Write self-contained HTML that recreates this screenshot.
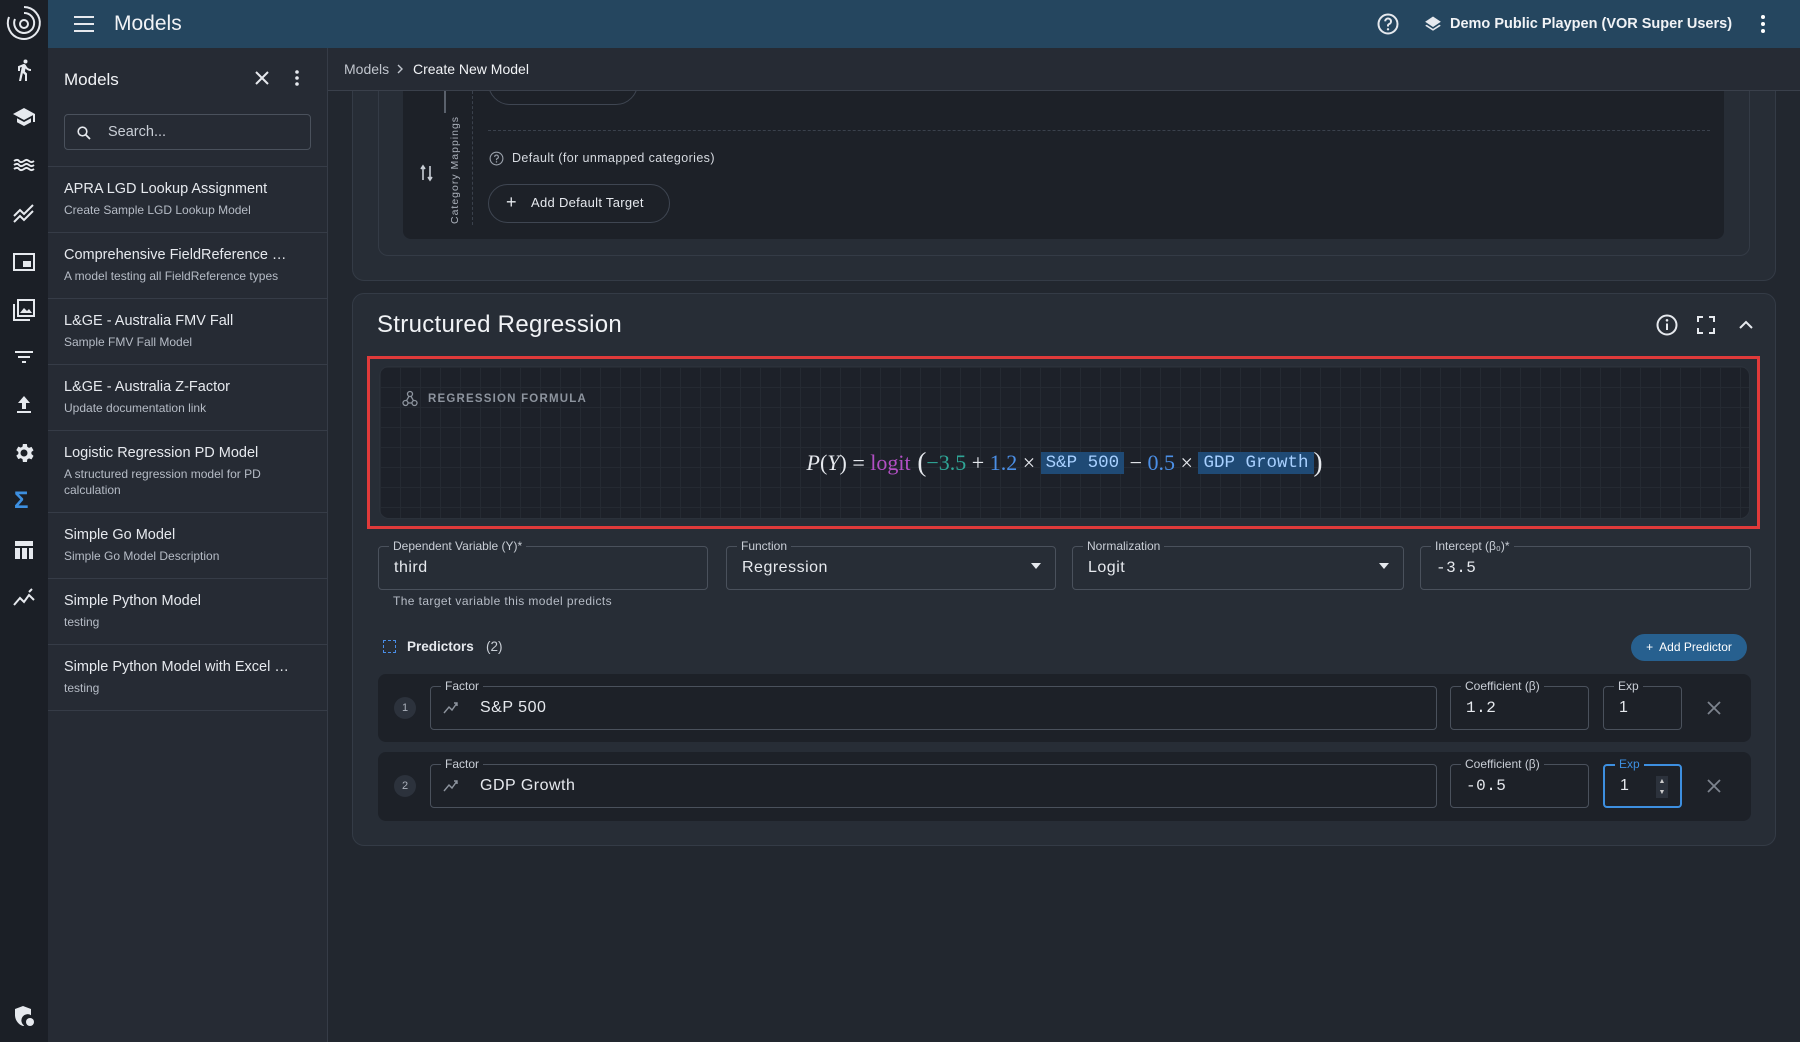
<!DOCTYPE html>
<html><head><meta charset="utf-8">
<style>
*{box-sizing:border-box;margin:0;padding:0}
body{width:1800px;height:1042px;overflow:hidden;background:#22272f;font-family:"Liberation Sans",sans-serif;color:#e6e9ee;position:relative}
.abs{position:absolute}
.rail{left:0;top:0;width:48px;height:1042px;background:#1b1f26}
.top{left:48px;top:0;width:1752px;height:48px;background:#25465f}
.side{left:48px;top:48px;width:280px;height:994px;background:#262b34;border-right:1px solid #363c47}
.item{position:absolute;left:0;width:279px;border-bottom:1px solid #363c47;padding-left:16px}
.item .t{font-size:14.5px;color:#e6e9ee;white-space:nowrap}
.item .s{font-size:12px;color:#b6bcc6;margin-top:5px;line-height:16px}
.crumb{left:328px;top:48px;width:1472px;height:43px;background:#262b34;border-bottom:1px solid #3a404b}
.card{background:#272d36;border:1px solid #343b46;border-radius:12px}
.fld{position:absolute;border:1px solid #4a515c;border-radius:4px;height:44px}
.fld .lb{position:absolute;top:-8px;left:10px;padding:0 4px;font-size:12px;color:#c9ced6;background:#272d36;line-height:14px}
.fld .v{position:absolute;left:15px;top:12px;font-size:16px;color:#e6e9ee;letter-spacing:.5px}
.row .fld .lb{background:#1d2128}
.mono{font-family:"Liberation Mono",monospace}
.ico{stroke:#e6e9ee;fill:none;stroke-width:2}
</style></head><body>

<!-- top card (partial) -->
<div class="abs card" style="left:352px;top:40px;width:1424px;height:241px"></div>
<div class="abs" style="left:378px;top:40px;width:1372px;height:216px;border:1px solid #343b46;border-radius:10px;background:#272d36"></div>
<div class="abs" style="left:403px;top:40px;width:1321px;height:199px;background:#1d2128;border-radius:8px"></div>
<div class="abs" style="left:488px;top:60px;width:150px;height:45px;border:1px solid #3f4652;border-radius:22px"></div>
<div class="abs" style="left:444px;top:91px;width:2px;height:22px;background:#5a616c"></div>
<div class="abs" style="left:472px;top:91px;height:134px;border-left:1px dashed #3a414c"></div>
<div class="abs" style="left:488px;top:130px;width:1222px;border-top:1px dashed #3a414c"></div>
<div class="abs" style="left:449px;top:224px;transform:rotate(-90deg);transform-origin:0 0;font-size:10.5px;letter-spacing:1px;color:#aab0ba;white-space:nowrap">Category Mappings</div>
<svg class="abs" style="left:419px;top:164px" width="16" height="18" viewBox="0 0 16 18"><path d="M4 16V3M2 5l2-3 2 3M11 2v13M9 13l2 3 2-3" fill="none" stroke="#c9ced6" stroke-width="1.6"/></svg>
<svg class="abs" style="left:489px;top:151px" width="15" height="15" viewBox="0 0 16 16"><circle cx="8" cy="8" r="6.8" fill="none" stroke="#9aa1ab" stroke-width="1.2"/><path d="M6 6.3a2 2 0 1 1 2.6 1.9c-.4.2-.6.5-.6 1v.6" fill="none" stroke="#9aa1ab" stroke-width="1.2"/><circle cx="8" cy="11.6" r=".8" fill="#9aa1ab"/></svg>
<div class="abs" style="left:512px;top:151px;font-size:12.5px;letter-spacing:.4px;color:#d6dae0">Default (for unmapped categories)</div>
<div class="abs" style="left:488px;top:184px;width:182px;height:39px;border:1px solid #3f4652;border-radius:20px"></div>
<div class="abs" style="left:506px;top:192px;font-size:18px;color:#e6e9ee">+</div>
<div class="abs" style="left:531px;top:195px;font-size:13px;color:#e6e9ee;letter-spacing:.3px">Add Default Target</div>

<div class="abs crumb"></div>
<div class="abs" style="left:344px;top:61px;font-size:14px;color:#c0c5cd">Models</div>
<svg class="abs" style="left:396px;top:64px" width="8" height="10" viewBox="0 0 8 10"><path d="M2 1l4 4-4 4" fill="none" stroke="#c0c5cd" stroke-width="1.4"/></svg>
<div class="abs" style="left:413px;top:61px;font-size:14px;color:#f1f3f6">Create New Model</div>

<div class="abs rail"></div>
<!-- rail icons -->
<svg class="abs" style="left:4px;top:3px" width="40" height="40" viewBox="0 0 40 40"><path d="M20 4a16 16 0 1 1-15 10" class="ico" stroke-width="2.5"/><path d="M20 10a10 10 0 1 1-9 6" class="ico" stroke-width="2.5"/><circle cx="20" cy="21" r="4" class="ico" stroke-width="2.5"/></svg>
<svg class="abs" style="left:12px;top:58px" width="24" height="24" viewBox="0 0 24 24"><path d="M13.5 5.5a2 2 0 1 0 0-4 2 2 0 0 0 0 4zM9.8 8.9 7 23h2.1l1.8-8 2.1 2v6h2v-7.5l-2.1-2 .6-3A7.3 7.3 0 0 0 19 13v-2c-1.9 0-3.5-1-4.3-2.4l-1-1.6c-.4-.6-1-1-1.7-1-.3 0-.5.1-.8.1L6 8.3V13h2V9.6z" fill="#e6e9ee"/></svg>
<svg class="abs" style="left:11px;top:105px" width="26" height="24" viewBox="0 0 24 24"><path d="M5 13.2v4L12 21l7-3.8v-4L12 17zM12 3 1 9l11 6 9-4.9V17h2V9z" fill="#e6e9ee"/></svg>
<svg class="abs" style="left:11px;top:153px" width="26" height="24" viewBox="0 0 24 24"><path d="M2 8c2-1.5 4-1.5 5 0s3 1.5 5 0 3-1.5 5 0 3 1.5 5 0M2 12c2-1.5 4-1.5 5 0s3 1.5 5 0 3-1.5 5 0 3 1.5 5 0M2 16c2-1.5 4-1.5 5 0s3 1.5 5 0 3-1.5 5 0 3 1.5 5 0" class="ico"/></svg>
<svg class="abs" style="left:11px;top:202px" width="26" height="24" viewBox="0 0 24 24"><path d="M2 14l6-6 4 4 9-9M2 20l6-6 4 4 9-9" class="ico"/></svg>
<svg class="abs" style="left:11px;top:250px" width="26" height="24" viewBox="0 0 24 24"><rect x="2" y="4" width="20" height="16" class="ico"/><rect x="11" y="11" width="8" height="6" fill="#e6e9ee"/></svg>
<svg class="abs" style="left:11px;top:298px" width="26" height="24" viewBox="0 0 24 24"><rect x="6" y="2" width="16" height="16" class="ico"/><path d="M2 6v16h16" class="ico"/><path d="M8 15l4-5 3 3 2-2 3 4z" fill="#e6e9ee"/></svg>
<svg class="abs" style="left:11px;top:345px" width="26" height="24" viewBox="0 0 24 24"><path d="M3 7h18M6 12h12M10 17h4" class="ico"/></svg>
<svg class="abs" style="left:11px;top:393px" width="26" height="24" viewBox="0 0 24 24"><path d="M5 18h14v2H5zM12 3l-6 7h4v6h4v-6h4z" fill="#e6e9ee"/></svg>
<svg class="abs" style="left:11px;top:441px" width="26" height="24" viewBox="0 0 24 24"><path d="M19.4 13a7.5 7.5 0 0 0 0-2l2.1-1.6-2-3.5-2.5 1a7 7 0 0 0-1.7-1L14.9 3h-4l-.4 2.6a7 7 0 0 0-1.7 1l-2.5-1-2 3.5L6.4 11a7.5 7.5 0 0 0 0 2l-2.1 1.6 2 3.5 2.5-1a7 7 0 0 0 1.7 1l.4 2.9h4l.4-2.6a7 7 0 0 0 1.7-1l2.5 1 2-3.5zM12 15.5a3.5 3.5 0 1 1 0-7 3.5 3.5 0 0 1 0 7z" fill="#e6e9ee"/></svg>
<div class="abs" style="left:14px;top:487px;font-size:24px;font-weight:bold;color:#3d8fe0">Σ</div>
<svg class="abs" style="left:11px;top:538px" width="26" height="24" viewBox="0 0 24 24"><path d="M3 3h18v5H3zM3 10h5v11H3zM10 10h5v11h-5zM17 10h4v11h-4z" fill="#e6e9ee"/></svg>
<svg class="abs" style="left:11px;top:586px" width="26" height="24" viewBox="0 0 24 24"><path d="M2 19l6-7 4 4 5-7 5 5M17 6l3-3" class="ico"/></svg>
<svg class="abs" style="left:12px;top:1004px" width="24" height="24" viewBox="0 0 24 24"><path d="M11 2 3 5v6c0 5 3.4 9.7 8 11 .4-.1.8-.3 1.2-.4A6 6 0 0 1 19 11.2V5z" fill="#e6e9ee"/><circle cx="18" cy="18" r="4" fill="#e6e9ee"/></svg>

<div class="abs top"></div>
<svg class="abs" style="left:72px;top:13px" width="24" height="22" viewBox="0 0 24 22"><path d="M2 4h20M2 11h20M2 18h20" class="ico"/></svg>
<div class="abs" style="left:114px;top:12px;font-size:21px;color:#f1f3f6">Models</div>
<svg class="abs" style="left:1376px;top:12px" width="24" height="24" viewBox="0 0 24 24"><circle cx="12" cy="12" r="9.5" class="ico"/><path d="M9.2 9.3a2.9 2.9 0 1 1 3.8 2.8c-.6.3-1 .8-1 1.5v.9" class="ico"/><circle cx="12" cy="17.3" r="1.2" fill="#e6e9ee"/></svg>
<svg class="abs" style="left:1424px;top:15px" width="18" height="18" viewBox="0 0 24 24"><path d="M12 2 1.5 9 12 16l10.5-7zM3.5 13 12 18.5 20.5 13l1.9 1.3L12 21 1.6 14.3z" fill="#e6e9ee"/></svg>
<div class="abs" style="left:1450px;top:16px;font-size:14.5px;font-weight:bold;color:#f1f3f6">Demo Public Playpen (VOR Super Users)</div>
<svg class="abs" style="left:1754px;top:12px" width="18" height="24" viewBox="0 0 18 24"><circle cx="9" cy="5" r="2" fill="#fff"/><circle cx="9" cy="12" r="2" fill="#fff"/><circle cx="9" cy="19" r="2" fill="#fff"/></svg>

<!-- sidebar -->
<div class="abs side">
 <div class="abs" style="left:16px;top:22px;font-size:17px;color:#f1f3f6">Models</div>
 <svg class="abs" style="left:204px;top:20px" width="20" height="20" viewBox="0 0 20 20"><path d="M4 4l12 12M16 4 4 16" class="ico"/></svg>
 <svg class="abs" style="left:241px;top:20px" width="16" height="20" viewBox="0 0 16 20"><circle cx="8" cy="4" r="1.8" fill="#e6e9ee"/><circle cx="8" cy="10" r="1.8" fill="#e6e9ee"/><circle cx="8" cy="16" r="1.8" fill="#e6e9ee"/></svg>
 <div class="abs" style="left:16px;top:66px;width:247px;height:36px;border:1px solid #4a515c;border-radius:4px"></div>
 <svg class="abs" style="left:28px;top:77px" width="16" height="16" viewBox="0 0 16 16"><circle cx="6.5" cy="6.5" r="4.3" fill="none" stroke="#e6e9ee" stroke-width="1.6"/><path d="M9.6 9.6 14 14" stroke="#e6e9ee" stroke-width="1.8"/></svg>
 <div class="abs" style="left:60px;top:76px;font-size:14.5px;color:#c9ced6">Search...</div>
 <div class="abs" style="left:0;top:118px;width:279px;border-top:1px solid #363c47"></div>
 <div class="item" style="top:119px;height:66px;padding-top:14px"><div class="t">APRA LGD Lookup Assignment</div><div class="s">Create Sample LGD Lookup Model</div></div>
 <div class="item" style="top:185px;height:66px;padding-top:14px"><div class="t">Comprehensive FieldReference …</div><div class="s">A model testing all FieldReference types</div></div>
 <div class="item" style="top:251px;height:66px;padding-top:14px"><div class="t">L&amp;GE - Australia FMV Fall</div><div class="s">Sample FMV Fall Model</div></div>
 <div class="item" style="top:317px;height:66px;padding-top:14px"><div class="t">L&amp;GE - Australia Z-Factor</div><div class="s">Update documentation link</div></div>
 <div class="item" style="top:383px;height:82px;padding-top:14px"><div class="t">Logistic Regression PD Model</div><div class="s">A structured regression model for PD<br>calculation</div></div>
 <div class="item" style="top:465px;height:66px;padding-top:14px"><div class="t">Simple Go Model</div><div class="s">Simple Go Model Description</div></div>
 <div class="item" style="top:531px;height:66px;padding-top:14px"><div class="t">Simple Python Model</div><div class="s">testing</div></div>
 <div class="item" style="top:597px;height:66px;padding-top:14px"><div class="t">Simple Python Model with Excel …</div><div class="s">testing</div></div>
</div>

<!-- Structured regression card -->
<div class="abs card" style="left:352px;top:293px;width:1424px;height:553px"></div>
<div class="abs" style="left:377px;top:311px;font-size:24px;color:#f1f3f6;letter-spacing:.3px">Structured Regression</div>
<svg class="abs" style="left:1655px;top:313px" width="24" height="24" viewBox="0 0 24 24"><circle cx="12" cy="12" r="9.5" class="ico"/><path d="M12 10.5V17" class="ico"/><circle cx="12" cy="7.3" r="1.3" fill="#e6e9ee"/></svg>
<svg class="abs" style="left:1697px;top:316px" width="18" height="18" viewBox="0 0 18 18"><path d="M1 6V1h5M12 1h5v5M17 12v5h-5M6 17H1v-5" class="ico"/></svg>
<svg class="abs" style="left:1737px;top:316px" width="18" height="18" viewBox="0 0 18 18"><path d="M3 12l6-6 6 6" class="ico"/></svg>

<div class="abs" style="left:367px;top:356px;width:1393px;height:173px;border:3px solid #e03a3a"></div>
<div class="abs" style="left:379px;top:366px;width:1371px;height:153px;border-radius:10px;background-color:#1d2129;background-image:linear-gradient(#252a32 1px,transparent 1px),linear-gradient(90deg,#252a32 1px,transparent 1px);background-size:20px 20px;border:1px solid #2b313a"></div>
<svg class="abs" style="left:402px;top:390px" width="16" height="17" viewBox="0 0 16 17"><circle cx="8" cy="4" r="2.5" fill="none" stroke="#8d949e" stroke-width="1.3"/><circle cx="3.5" cy="13" r="2.5" fill="none" stroke="#8d949e" stroke-width="1.3"/><circle cx="12.5" cy="13" r="2.5" fill="none" stroke="#8d949e" stroke-width="1.3"/><path d="M7 6.3 4.5 10.7M9 6.3l2.5 4.4M6 13h4" stroke="#8d949e" stroke-width="1.3"/></svg>
<div class="abs" style="left:428px;top:393px;font-size:11.5px;font-weight:bold;letter-spacing:1.2px;color:#8d949e">REGRESSION FORMULA</div>
<div class="abs" style="left:379px;top:447px;width:1371px;display:flex;justify-content:center;align-items:center;font-family:'Liberation Serif',serif;font-size:22px;color:#e6e9ee;white-space:pre">
<span><i>P</i>(<i>Y</i>) = </span><span style="color:#b24fc4">logit</span><span style="font-size:27px"> (</span><span style="color:#2fa596">−3.5</span><span> + </span><span style="color:#4b8fe6">1.2</span><span> × </span><span class="mono" style="background:#1f4a75;color:#a8d0ff;font-size:17.5px;padding:1px 5px">S&amp;P 500</span><span> − </span><span style="color:#4b8fe6">0.5</span><span> × </span><span class="mono" style="background:#1f4a75;color:#a8d0ff;font-size:17.5px;padding:1px 5px">GDP Growth</span><span style="font-size:27px">)</span>
</div>

<!-- fields -->
<div class="fld" style="left:378px;top:546px;width:330px"><span class="lb">Dependent Variable (Y)*</span><span class="v">third</span></div>
<div class="fld" style="left:726px;top:546px;width:330px"><span class="lb">Function</span><span class="v">Regression</span><span class="abs" style="right:14px;top:16px;border:5px solid transparent;border-top:6px solid #e6e9ee"></span></div>
<div class="fld" style="left:1072px;top:546px;width:332px"><span class="lb">Normalization</span><span class="v">Logit</span><span class="abs" style="right:14px;top:16px;border:5px solid transparent;border-top:6px solid #e6e9ee"></span></div>
<div class="fld" style="left:1420px;top:546px;width:331px"><span class="lb">Intercept (β₀)*</span><span class="v mono">-3.5</span></div>
<div class="abs" style="left:393px;top:594px;font-size:12px;letter-spacing:.4px;color:#b6bcc6">The target variable this model predicts</div>

<div class="abs" style="left:383px;top:640px;width:13px;height:13px;border:1.5px dashed #4a8ee8"></div>
<div class="abs" style="left:407px;top:639px;font-size:13.5px;font-weight:bold;color:#e6e9ee">Predictors</div>
<div class="abs" style="left:486px;top:639px;font-size:13.5px;color:#c9ced6">(2)</div>
<div class="abs" style="left:1631px;top:634px;width:116px;height:27px;border-radius:14px;background:#27608f;font-size:12px;color:#fff;text-align:center;line-height:27px">+&nbsp; Add Predictor</div>

<!-- rows -->
<div class="row">
<div class="abs" style="left:378px;top:674px;width:1373px;height:68px;background:#1d2128;border-radius:8px"></div>
<div class="abs" style="left:394px;top:697px;width:22px;height:22px;border-radius:50%;background:#2c323c;font-size:11px;color:#aab0ba;text-align:center;line-height:22px">1</div>
<div class="fld" style="left:430px;top:686px;width:1007px"><span class="lb">Factor</span><svg class="abs" style="left:12px;top:14px" width="16" height="14" viewBox="0 0 16 14"><path d="M1 12l5-6 3 3 5-7M11 2h3v3" fill="none" stroke="#8d949e" stroke-width="1.4"/></svg><span class="v" style="left:49px">S&amp;P 500</span></div>
<div class="fld" style="left:1450px;top:686px;width:139px"><span class="lb">Coefficient (β)</span><span class="v mono">1.2</span></div>
<div class="fld" style="left:1603px;top:686px;width:79px"><span class="lb">Exp</span><span class="v">1</span></div>
<svg class="abs" style="left:1706px;top:700px" width="16" height="16" viewBox="0 0 16 16"><path d="M2 2l12 12M14 2 2 14" stroke="#7d848e" stroke-width="1.8"/></svg>

<div class="abs" style="left:378px;top:752px;width:1373px;height:69px;background:#1d2128;border-radius:8px"></div>
<div class="abs" style="left:394px;top:775px;width:22px;height:22px;border-radius:50%;background:#2c323c;font-size:11px;color:#aab0ba;text-align:center;line-height:22px">2</div>
<div class="fld" style="left:430px;top:764px;width:1007px"><span class="lb">Factor</span><svg class="abs" style="left:12px;top:14px" width="16" height="14" viewBox="0 0 16 14"><path d="M1 12l5-6 3 3 5-7M11 2h3v3" fill="none" stroke="#8d949e" stroke-width="1.4"/></svg><span class="v" style="left:49px">GDP Growth</span></div>
<div class="fld" style="left:1450px;top:764px;width:139px"><span class="lb">Coefficient (β)</span><span class="v mono">-0.5</span></div>
<div class="fld" style="left:1603px;top:764px;width:79px;border:2px solid #3d8fe0"><span class="lb" style="color:#3d8fe0;top:-9px">Exp</span><span class="v" style="top:11px">1</span><span class="abs" style="left:51px;top:10px;width:12px;height:22px;background:#2c323c;font-size:7px;color:#ccc;text-align:center;line-height:11px">▲<br>▼</span></div>
<svg class="abs" style="left:1706px;top:778px" width="16" height="16" viewBox="0 0 16 16"><path d="M2 2l12 12M14 2 2 14" stroke="#7d848e" stroke-width="1.8"/></svg>
</div>
</body></html>
